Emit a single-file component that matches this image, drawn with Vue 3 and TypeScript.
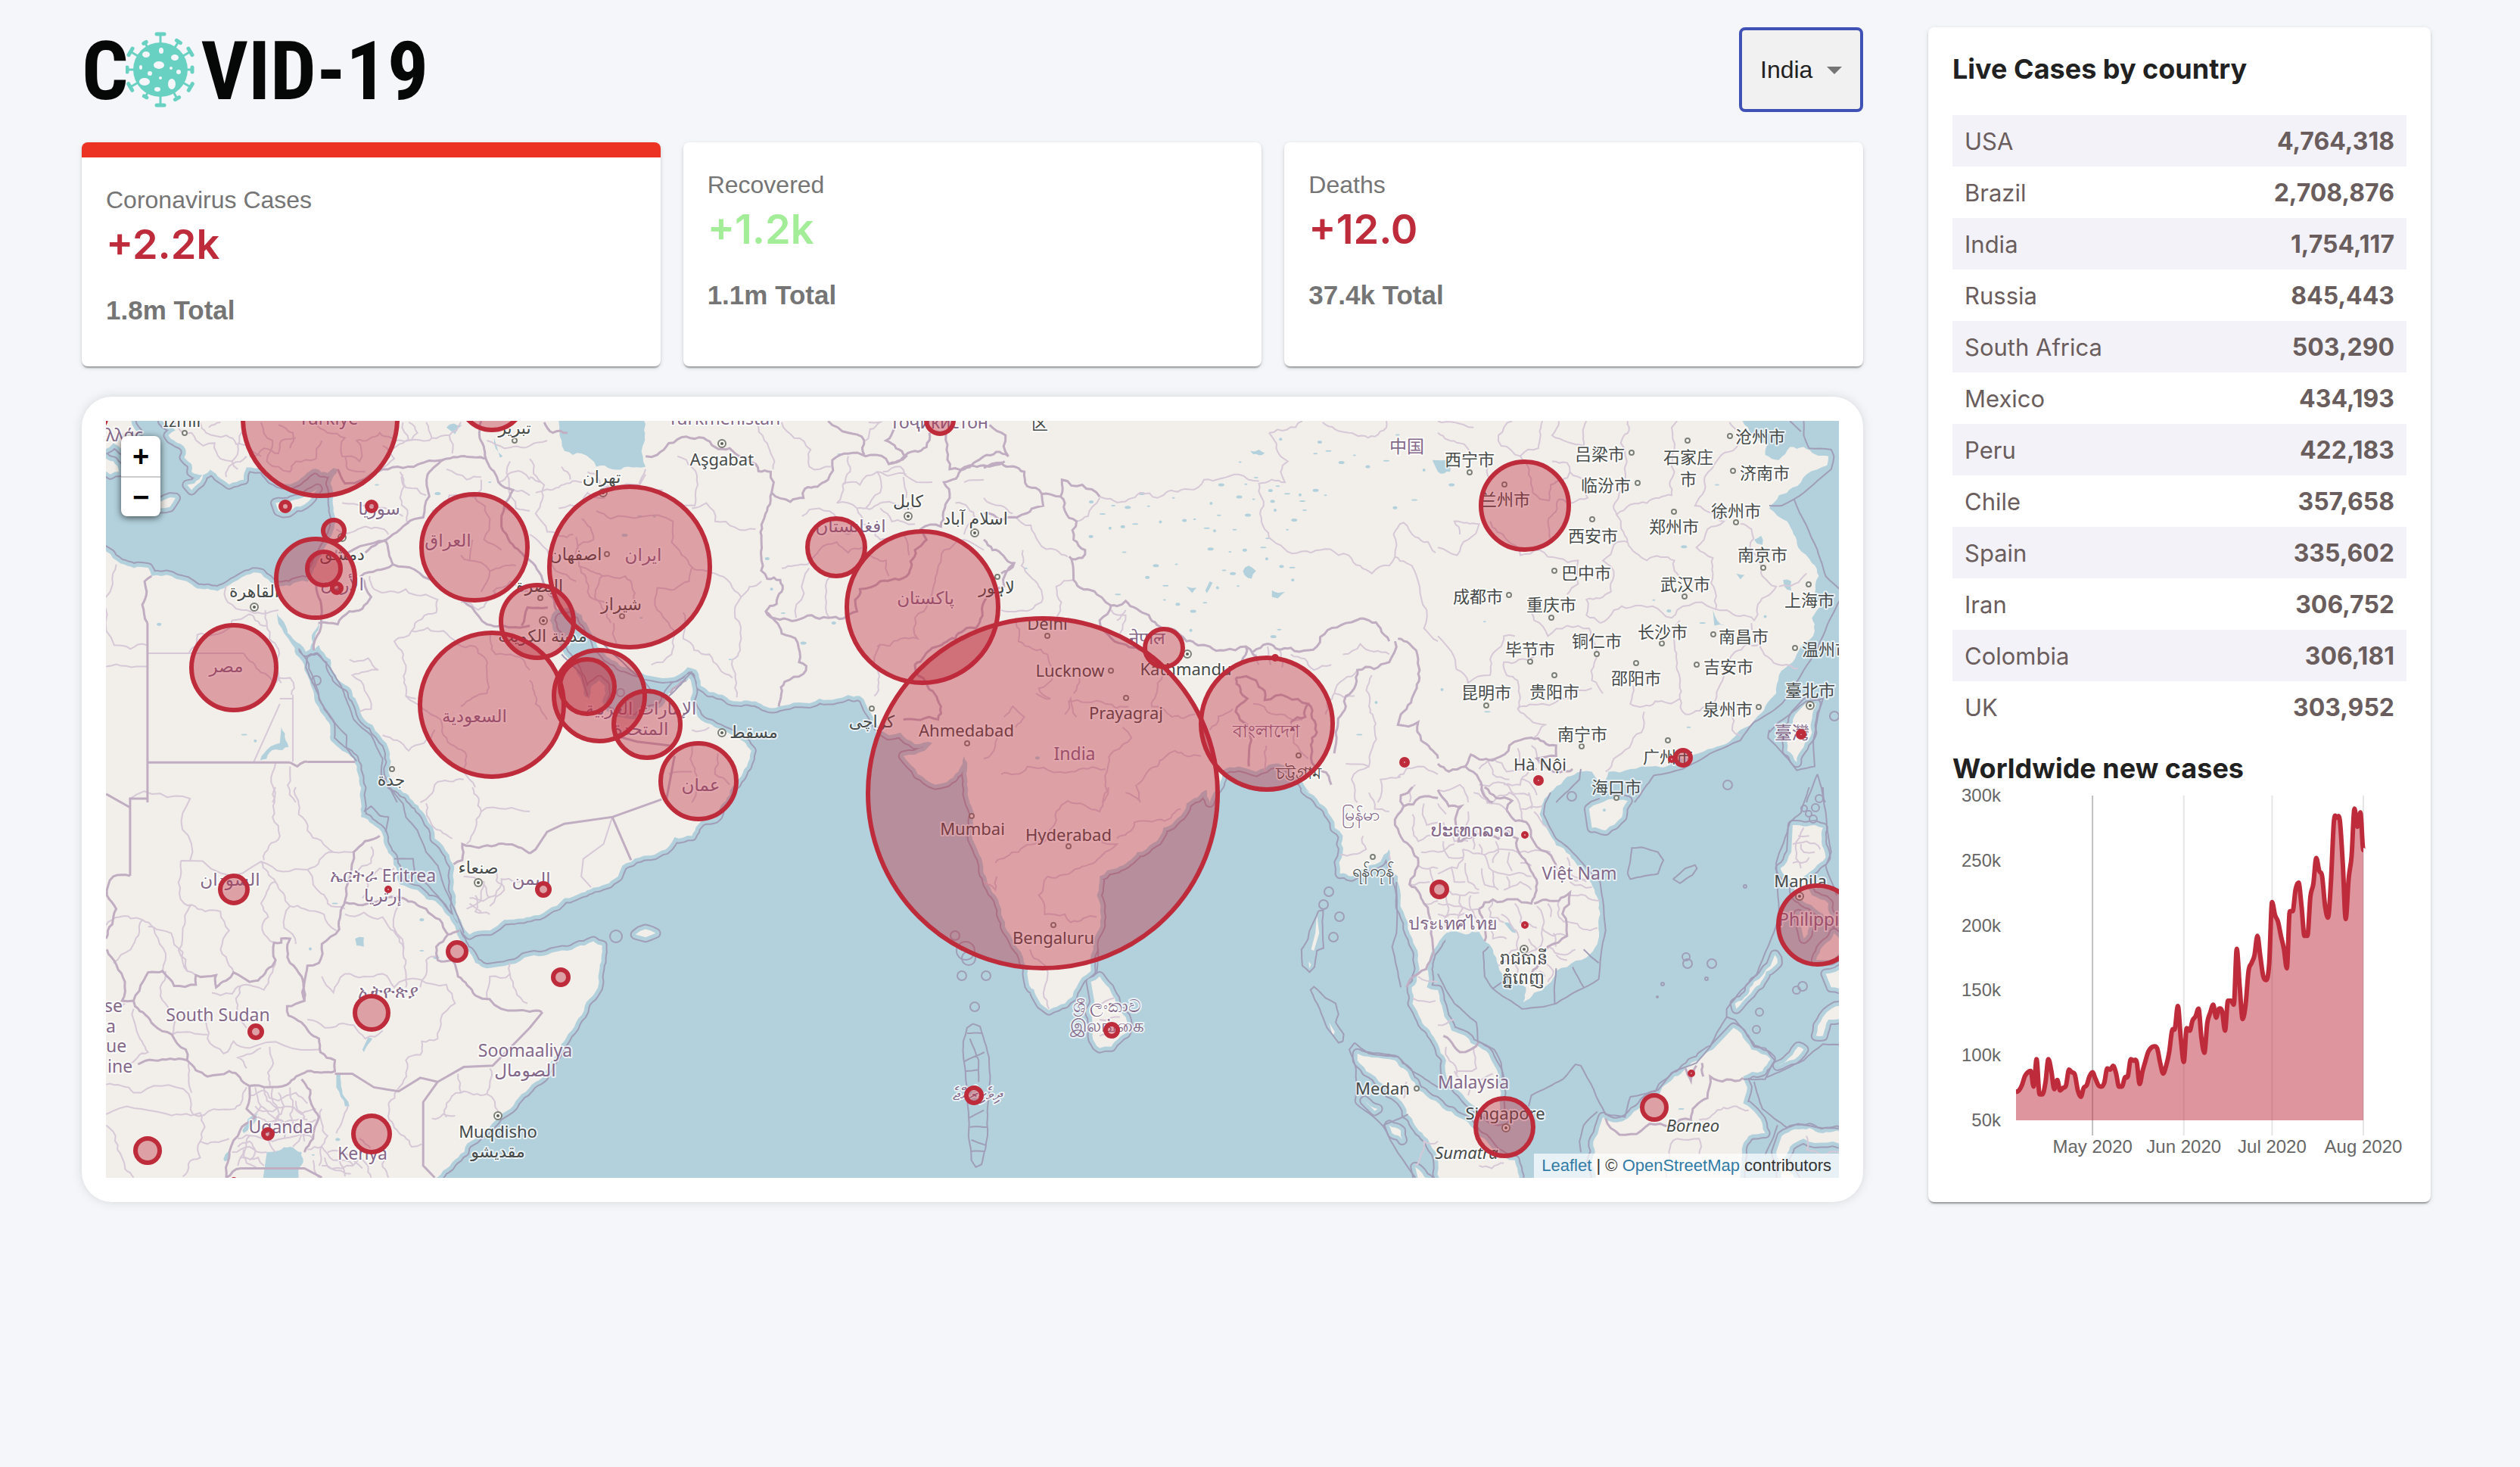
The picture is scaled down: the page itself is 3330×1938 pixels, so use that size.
<script setup lang="ts">
import { ref } from 'vue'

type Point = [number, number]

interface Stat { title: string; change: string; total: string; tone: 'red' | 'green'; active: boolean }
interface Label { text: string; x: number; y: number; kind: 'city' | 'country' | 'island'; anchor?: 'start' | 'middle' }

const country = ref('India')

const stats: Stat[] = [
  { title: 'Coronavirus Cases', change: '+2.2k', total: '1.8m Total', tone: 'red', active: true },
  { title: 'Recovered', change: '+1.2k', total: '1.1m Total', tone: 'green', active: false },
  { title: 'Deaths', change: '+12.0', total: '37.4k Total', tone: 'red', active: false },
]

const countries: [string, string][] = [
  ['USA', '4,764,318'], ['Brazil', '2,708,876'], ['India', '1,754,117'], ['Russia', '845,443'],
  ['South Africa', '503,290'], ['Mexico', '434,193'], ['Peru', '422,183'], ['Chile', '357,658'],
  ['Spain', '335,602'], ['Iran', '306,752'], ['Colombia', '306,181'], ['UK', '303,952'],
]

/* ---------- logo ---------- */
const spikes: [number, number, number][] = [
  [0, 47, 7], [33, 44, 5], [59, 46, 7], [90, 42, 5], [120, 46, 7], [150, 44, 5],
  [180, 47, 7], [209, 41, 4], [240, 46, 7], [270, 44, 5], [301, 46, 7], [330, 41, 4],
]
const holes: [number, number, number, number][] = [
  [27, 30, 5, 4], [47, 25, 3, 4], [65, 34, 5, 4], [44, 44, 7, 5], [20, 47, 2, 3], [32, 55, 3, 3],
  [60, 48, 2, 2], [70, 53, 3, 3], [25, 66, 7, 5], [46, 61, 2, 2], [61, 69, 5, 7], [42, 76, 4, 3],
]

/* ---------- line chart ---------- */
const daily = [
  72, 73, 77, 84, 87, 88, 76, 97, 70, 70, 79, 97, 88, 74, 81, 73, 75, 77, 89, 87, 85, 73, 68, 75, 77, 84, 87,
  82, 77, 76, 79, 90, 89, 92, 86, 76, 76, 83, 84, 97, 96, 95, 78, 88, 96, 103, 106, 107, 105, 94, 86, 92, 102,
  119, 121, 138, 113, 95, 121, 119, 127, 130, 136, 113, 102, 125, 133, 139, 129, 136, 134, 119, 142, 142, 139,
  182, 153, 128, 139, 165, 171, 177, 192, 176, 161, 158, 170, 218, 208, 203, 192, 182, 167, 211, 211, 228, 233,
  215, 192, 192, 222, 232, 252, 242, 238, 215, 206, 234, 280, 283, 281, 248, 205, 236, 253, 290, 276, 287, 258,
]
const plot = { left: 84, right: 543, top: 13, bottom: 442 }
const dayX = (day: number) => plot.left + (day * (plot.right - plot.left)) / (daily.length - 1)
const valueY = (k: number) => plot.bottom - ((k - 50) / 250) * (plot.bottom - plot.top)
const chartPoints: Point[] = daily.map((v, i) => [dayX(i), valueY(v)])

// Slope is flat on every local peak, so the curve never overshoots the data.
function curve(pts: Point[]): string {
  const slope = pts.map((p, i) => {
    const a = pts[i - 1]
    const b = pts[i + 1]
    if (!a || !b) return 0
    return (p[1] - a[1]) * (b[1] - p[1]) <= 0 ? 0 : (b[1] - a[1]) / (b[0] - a[0])
  })
  let d = `M${pts[0][0]},${pts[0][1]}`
  for (let i = 1; i < pts.length; i++) {
    const p = pts[i - 1]
    const q = pts[i]
    const h = (q[0] - p[0]) / 3
    d += `C${(p[0] + h).toFixed(1)},${(p[1] + slope[i - 1] * h).toFixed(1)} ${(q[0] - h).toFixed(1)},${(q[1] - slope[i] * h).toFixed(1)} ${q[0].toFixed(1)},${q[1].toFixed(1)}`
  }
  return d
}
const linePath = curve(chartPoints)
const areaPath = `${linePath}L${plot.right},${plot.bottom}L${plot.left},${plot.bottom}Z`
const yTicks = [300, 250, 200, 150, 100, 50]
const xTicks = [
  { label: 'May 2020', day: 26 }, { label: 'Jun 2020', day: 57 },
  { label: 'Jul 2020', day: 87 }, { label: 'Aug 2020', day: 118 },
]

/* ---------- map geometry ---------- */
// Every sheet of the map has its own grid; these turn grid points into map points.
const sheet = (ox: number, oy: number, kx: number, ky: number) => (pts: string): Point[] =>
  pts.trim().split(/\s+/).map((p) => {
    const [x, y] = p.split(',').map(Number)
    return [ox + x * kx, oy + y * ky]
  })
const A = sheet(100, 520, 0.3827, 0.3444)
const B = sheet(700, 520, 0.3827, 0.3444)
const C = sheet(1300, 520, 0.3827, 0.3444)
const D = sheet(1900, 520, 0.3635, 0.3444)
const E = sheet(100, 1040, 0.3827, 0.3571)
const F = sheet(700, 1040, 0.3827, 0.3571)
const G = sheet(1300, 1040, 0.3827, 0.3571)
const H = sheet(1900, 1040, 0.3635, 0.3571)

const noise = (x: number, y: number) => {
  const s = Math.sin(x * 12.9898 + y * 78.233) * 43758.5453
  return s - Math.floor(s) - 0.5
}
// Very long segments only close a ring outside the map, so they stay straight.
function rough(pts: Point[], amount = 0.34): Point[] {
  const split = (a: Point, b: Point, depth: number): Point[] => {
    const dx = b[0] - a[0]
    const dy = b[1] - a[1]
    const length = Math.hypot(dx, dy)
    if (depth === 0 || length < 8 || length > 300) return [b]
    const n = noise(a[0] + b[0], a[1] + b[1]) * amount
    const m: Point = [(a[0] + b[0]) / 2 - dy * n, (a[1] + b[1]) / 2 + dx * n]
    return [...split(a, m, depth - 1), ...split(m, b, depth - 1)]
  }
  return pts.reduce<Point[]>((out, p, i) => (i === 0 ? [p] : [...out, ...split(pts[i - 1], p, 3)]), [])
}
const d = (pts: Point[], closed = false) =>
  'M' + pts.map((p) => `${p[0].toFixed(1)},${p[1].toFixed(1)}`).join('L') + (closed ? 'Z' : '')
const lines = (at: (s: string) => Point[], list: string[], amount?: number) =>
  list.map((s) => d(rough(at(s), amount))).join('')

const chinaCoast = D('1110,60 1115,120 1150,165 1200,190 1190,235 1240,255 1280,205 1330,205 1420,240 1415,275 1340,310 1290,360 1240,390 1205,440 1270,490 1310,590 1360,650 1385,700 1370,770 1400,810 1360,860 1370,910 1320,970 1290,1030 1240,1080 1230,1150 1190,1200 1160,1240 1100,1290 1060,1335 1000,1360 930,1385 870,1410 780,1430 700,1440 620,1450 600,1500 560,1450 520,1450 470,1470 420,1520 380,1568')
const vietnamCoast = H('385,30 370,100 400,160 430,215 480,250 540,330 570,380 590,470 580,580 540,630 470,665 430,680 400,730 350,760 310,795 320,740 260,710 220,660 200,600 170,570 150,535 100,545 30,540')

const continent: Point[] = [
  ...A('60,590 105,605 155,652 250,668 262,700 330,700 400,732 490,757 530,735 590,695 640,690 690,735 740,738 800,722 830,660 860,590 885,540 900,490 890,450 888,400 880,345 905,290 890,285 870,305 830,288 790,315 740,348 690,335 650,290 590,283 580,330 530,348 500,325 465,292 440,312 400,300 400,270 375,245 380,215 340,180 320,160 345,140 300,105 310,60'),
  ...chinaCoast,
  ...vietnamCoast,
  ...G('1568,580 1535,650 1530,740 1560,750'),
  ...H('0,750 20,830 50,900 100,920 150,960 190,1000 220,1060 230,1130 225,1200 240,1230 200,1230 150,1200 100,1150 40,1090 30,1010 0,950'),
  ...G('1540,900 1510,860 1480,800 1478,740 1500,690 1500,620 1480,560 1455,480 1440,400 1430,330 1400,230 1370,275 1330,290 1270,330 1230,320 1240,240 1240,180 1200,110 1160,60 1110,10'),
  ...C('1140,1540 1100,1490 1060,1440 1000,1420 940,1450 880,1430 820,1450 815,1500 780,1568'),
  ...G('770,10 700,60 620,150 530,240 460,300 400,330 390,400 405,480 390,540 370,620 370,680 320,740 280,800 225,825 180,770 150,690 120,600 80,530 60,470 40,400 10,340'),
  ...F('1568,320 1545,230 1530,150 1520,60'),
  ...B('1510,1500 1500,1390 1480,1450 1440,1490 1400,1500 1340,1460 1290,1390 1330,1385 1390,1340 1330,1345 1280,1300 1240,1310 1180,1230 1160,1190 1140,1160 1060,1170 1000,1170 930,1185 860,1200 780,1180 680,1165 620,1145 590,1120 575,1060 545,1050 480,1090 400,1080 330,1050 260,1000 220,930 180,850 150,820 90,830 70,870 100,930 120,1000 150,1040 180,1110 190,1160 205,1170 215,1120 240,1100 260,1120 250,1180 260,1210 300,1240 370,1250 440,1210 480,1150 530,1110 550,1090 555,1180 580,1240 640,1280 700,1310 765,1370 750,1430 720,1480 690,1540'),
  ...F('640,115 580,140 560,180 500,185 480,220 430,250 380,260 320,290 305,330 260,360 180,390 120,410 60,455 0,480'),
  ...E('1480,490 1430,530 1360,545 1335,510 1310,440 1305,340 1290,250 1240,190 1210,110 1150,30'),
  ...A('1130,1530 1090,1500 1080,1440 1085,1380 1050,1310 990,1240 970,1180 920,1110 880,1020 840,965 822,985 838,880 810,980 795,990 750,940 725,890 695,840 720,920 760,1000 790,1060 820,1140 860,1240 880,1330 920,1370 960,1400 975,1460 985,1568'),
  ...E('985,110 1060,175 1095,260 1120,360 1180,380 1250,430 1300,500 1325,560 1345,600 1380,650 1420,670 1500,655'),
  ...F('0,625 60,620 130,605 190,585 220,570 250,585 240,680 225,760 190,810 160,870 125,930 70,1020 20,1090'),
  ...E('1500,1190 1400,1280 1320,1370 1240,1450 1200,1560 60,1560'),
]

const islands: Point[][] = [
  A('60,60 185,60 195,120 215,150 180,180 160,215 130,190 100,215 60,215'),
  A('90,240 130,260 150,300 120,310 90,290'),
  A('270,425 310,405 345,400 325,435 290,440'),
  A('385,350 410,345 440,310 430,340 400,370'),
  A('690,420 780,400 835,365 815,400 790,425 735,455 700,450'),
  G('370,720 400,700 440,760 490,850 490,910 440,960 400,965 375,920 365,830 380,780'),
  F('365,545 400,525 435,540 400,555'),
  H('550,80 620,45 690,50 670,110 610,160 560,150'),
  D('1340,1185 1375,1190 1360,1300 1305,1415 1270,1370 1265,1300 1300,1230'),
  H('1290,140 1340,145 1400,150 1395,200 1410,260 1370,300 1330,330 1360,400 1420,430 1440,500 1400,470 1340,430 1300,400 1245,300 1285,240'),
  H('1310,470 1350,520 1330,560'),
  H('1225,620 1235,650 1170,730 1085,820 1080,800 1150,720 1210,660'),
  H('1410,690 1480,660 1480,760 1430,740'),
  H('1375,640 1440,540 1480,600 1430,640'),
  H('1500,800 1430,820 1400,850 1375,920 1400,920 1420,860 1500,850'),
  H('1235,1030 1290,990 1310,960 1330,970 1280,1010'),
  H('1075,890 1120,940 1140,970 1210,1005 1180,1050 1110,1070 1125,1110 1110,1170 1190,1280 1130,1290 1105,1340 1100,1420 1090,1500 580,1500 560,1400 570,1300 600,1220 650,1240 690,1225 740,1180 800,1140 860,1070 900,1040 950,1010 1000,970'),
  H('1250,1290 1300,1265 1400,1280 1500,1270 1500,1310 1330,1300 1280,1330 1260,1380 1300,1450 1240,1460 1230,1350'),
  [
    ...G('1290,985 1340,1000 1420,1010 1450,1040 1470,1070 1500,1120 1560,1160'),
    ...H('50,1200 110,1240 150,1290 210,1350 280,1380 290,1500 40,1500'),
    ...G('1560,1350 1520,1290 1460,1210 1430,1150 1380,1100 1320,1050 1290,1010'),
  ],
  G('1400,1250 1440,1270 1445,1305 1410,1280'),
  G('1490,1405 1535,1450 1500,1450'),
  G('1315,1160 1360,1190 1350,1197'),
]
const islets = [
  G('1150,470 1158,540 1140,605 1130,600 1145,540'),
  G('1192,870 1212,905 1205,920'),
  G('1122,645 1130,655 1124,670'),
].map((r) => d(r, true)).join('')

const continentPath = d(rough(continent, 0.26), true)
const islandPath = islands.map((r) => d(rough(r, 0.26), true)).join('')
const farCoast = d(chinaCoast) + d(vietnamCoast)

const lakes = [
  B('100,60 100,105 110,180 120,220 180,230 230,280 285,290 340,280 400,280 390,200 395,105 400,60'),
  E('660,1350 740,1330 780,1350 770,1440 760,1500 640,1500'),
  E('965,560 995,555 995,590 970,585'),
  E('900,1055 915,1060 920,1120 945,1180 930,1180 900,1110'),
  E('1010,925 1025,930 995,980 990,970'),
  E('575,1270 630,1205 625,1230 580,1280'),
  E('510,1375 530,1345 535,1360 515,1385'),
  A('710,1280 725,1330 735,1355 690,1365 620,1425 650,1380 705,1340'),
  A('1280,130 1335,120 1310,155'),
  A('1445,170 1475,240 1465,245'),
  D('-20,255 50,260 45,300 0,300'),
  D('1000,830 1015,870 1045,890 1005,890'),
  D('1255,715 1285,720 1285,755 1260,740'),
  D('1150,560 1175,545 1180,580 1160,575'),
  D('1085,690 1115,695 1100,712'),
  H('240,500 270,510 285,540 260,525'),
  C('895,680 915,660 940,680 925,710 900,695'),
  C('995,755 1040,760 1015,785 995,780'),
  C('780,720 790,725 770,765 765,755'),
  C('700,740 735,745 720,765'),
  C('920,220 950,215 970,228 930,232'),
].map((r) => d(rough(r), true)).join('')

const ponds: Point[] = [
  ...C('885,263 1160,186 1190,220 1025,175 1145,230 1235,264 1280,237 1326,280 1390,258 1520,293 940,322 820,350 905,348 990,372 1048,384 1092,388 1015,355 882,396 932,405 997,413 1100,412 1006,447 1108,447 1146,371 1180,390 1420,438 1487,408 785,421 812,467 912,466 728,482 693,486 770,516 797,526 866,522 1072,485 1048,522 480,510 523,500 436,516 447,430 497,436 569,432 371,415 410,462 610,492 485,608 783,596 850,607 901,600 965,590 977,634 980,555 594,660 665,655 565,705 628,737 807,745 830,678 860,690 878,738 1028,663 1065,667 1067,715 764,802 723,835 624,791 670,808 463,770 715,908 1020,905 1000,932 146,670 185,1397 1297,1308 1355,1185 1429,158 546,383 655,400 370,548'),
  ...D('180,1220 15,1135 912,1280 895,587 785,792 840,833 962,880 1190,855 1015,350 50,350 170,875'),
  ...A('288,885 582,1308 620,1332 1040,350 1250,383 1430,340'),
  ...B('820,633 858,715 835,750 875,842 945,957 692,1020 1050,880 1072,232 430,470 380,470 328,543 385,860'),
  ...E('1195,490 895,430 810,598 1195,605 1245,630 820,1360 905,1303'),
  ...H('885,1190 605,85 840,830 1180,940'),
]

const majorBorders = [
  lines(A, [
    '262,700 238,720 245,760 230,810 248,880', '740,1415 765,1430 790,1412 800,1412',
    '822,985 850,840 830,720', '838,880 905,885 945,835 990,825 1020,780 985,700 1095,655 1070,565 905,640 900,600',
    '1000,610 1095,540 1200,475 1215,310 1280,250', '1095,655 1170,675 1300,775 1420,885 1470,890 1568,890',
    '905,290 930,345 1060,290 1130,285 1200,265 1280,250 1330,240 1420,250',
    '1400,105 1395,170 1420,260 1460,340 1510,370 1480,430 1470,510 1500,570 1568,640 1620,740 1660,830',
    '1540,890 1560,820 1630,820',
  ], 0.2),
  lines(E, [
    '108,600 170,720 160,790 200,790 235,715 250,685 300,680 340,735 415,730 415,695 485,695 485,740 520,715 545,685 600,720 630,715 690,640 685,575 710,575 710,560 740,560 740,650 780,700 790,790 730,810 735,845 780,870 840,930 845,980 895,1010 895,1050 800,1050 730,1100 600,1105 530,1050 455,1070 385,1010 380,970 270,880 205,810 200,790',
    '385,1010 270,1010 215,1025', '790,790 800,660 840,650 850,580 910,525 930,420 960,240 1050,180',
    '930,425 1050,420 1130,410 1210,450 1285,545 1245,590 1250,640 1300,640 1320,700 1380,770 1568,830 1610,832',
    '780,1080 810,1120 840,1220 820,1300 790,1350', '600,1105 590,1190 620,1220 560,1290 530,1370 520,1444 570,1410',
    '188,328 130,330 108,400 140,450 105,560', '1305,285 1335,270 1335,210 1450,215 1540,225 1568,245', '1285,545 1325,530',
  ], 0.24),
  lines(B, [
    '400,240 440,235 480,190 540,165 600,170 640,205 690,210 780,270 790,298 832,300 835,380 805,490 800,545 800,640 820,710 865,715 870,760 815,835 870,920 925,955 930,1030 955,1045 945,1075 880,1105 860,1200',
    '835,380 900,415 945,400 950,365 1030,330 1045,255 1100,230 1160,240 1230,250 1240,270 1330,220 1370,205 1380,150',
    '1030,105 1100,150 1155,180 1155,235', '1240,270 1300,240 1230,180 1260,130', '1440,140 1450,290 1520,275 1568,275 1640,260',
    '815,835 920,870 1030,860 1130,835 1140,750 1210,720 1310,690 1330,600 1370,560 1350,520 1420,510 1450,400 1430,340 1500,290 1568,240',
    '1673,650 1568,800 1540,900 1470,940 1390,975 1330,1040 1370,1110 1420,1200 1410,1250 1290,1250',
    '485,1150 540,1100', '50,110 80,150 130,150',
  ]),
  lines(C, [
    '20,120 75,160 85,240 0,240', '0,285 60,265 140,300 150,355 200,385 265,395 270,330 340,350 400,395', '200,385 205,430 130,465 0,460',
    '265,395 280,450 320,490 310,560 350,600 340,630 295,625 310,715 390,770 460,815 490,795 570,850 640,900 700,950 780,970 830,985 905,970 890,1030',
    '930,990 980,960 1060,975 1090,990 1150,970 1250,880 1330,870 1370,900 1400,950', '0,560 30,600 105,650 60,690',
    '440,810 400,870 480,960 560,1010', '905,970 930,1000 960,1020',
    '1430,940 1470,960 1500,1020 1495,1130 1440,1230 1430,1270 1500,1260 1510,1330 1568,1400',
    '1420,950 1400,1030 1290,1060 1250,1160 1250,1200 1215,1300 1210,1380',
    '870,1090 940,1100 970,1140 970,1175 1120,1190 1110,1240 1060,1260', '870,1090 910,1170 870,1220 910,1270 915,1430', '1120,1190 1150,1300 1130,1400 1200,1500',
  ]),
  lines(D, ['0,1420 40,1450 100,1430 120,1385 210,1400 260,1350 340,1320 430,1350 430,1390 360,1400 400,1440 490,1440', '100,1430 150,1480 200,1568']),
  lines(G, ['1568,40 1450,70 1420,140 1450,200 1500,290 1470,360 1520,430 1550,580 1500,690 1460,740', '1450,70 1440,30 1480,0']),
  lines(H, [
    '150,450 200,415 340,430 350,330 300,250 290,190 240,160 220,190 160,170 75,200 85,70 40,70 0,10',
    '250,85 330,140 360,220 420,270 430,300', '350,430 440,420 480,390 470,550 400,590 340,690', '170,0 270,50 250,85', '170,570 150,450',
    '20,920 60,960 80,980 120,970 150,940', '610,1225 660,1285 740,1270 770,1245 920,1230 980,1150 990,1070 1110,1075', '900,1040 920,1085 940,1030', '960,1020 965,1070',
  ]),
].join('')

const straightBorders = [
  d(A('248,880 248,1568')), d(A('248,1415 740,1415')), d(A('800,1413 965,1413')), d(E('248,0 248,42 188,42 188,328')), d(E('105,25 188,75')),
  d(E('1568,890 1440,1030 1340,1035 1250,1090 1190,1075 1115,1125 1030,1110 955,1060 895,1060')), d(E('1568,890 1612,832')),
  d(E('1250,1090 1200,1165 1200,1400 1240,1444')), d(E('570,1410 790,1410 850,1444')),
  d(F('0,245 20,230 60,165 120,135 285,110 350,270')), d(F('285,110 455,45')), d(B('485,1350 370,1335 290,1310')), d(B('500,1390 470,1568')),
].join('')
const straightMinor = [
  d(A('248,996 580,996')), d(A('750,1155 750,1412')), d(A('705,1170 750,1170')), d(A('705,1190 615,1412')), d(F('285,110 255,210 185,265 178,330 212,370')),
].join('')

const minorBorders = [
  lines(A, [
    '140,655 128,730 133,965 245,965', '105,1047 245,1047', '580,996 640,1070 680,1115 700,1090 740,1090 755,1130 745,1155', '390,996 420,925 530,900 540,870 600,845',
    '690,1415 680,1568', '740,1430 760,1568', '520,735 525,800 590,830 700,830', '660,890 700,980 710,1110', '600,845 620,870 660,890 655,830',
    '1015,700 1030,750 1140,750 1250,790 1245,840 1160,910 1100,950 1140,1060 1140,1160 1175,1170', '945,1020 1010,1015 1045,1060 955,1080 1020,1210 980,1220',
    '1160,910 1270,910 1380,970 1420,1060 1420,1150 1330,1200', '1140,1160 1260,1250 1270,1310 1350,1390 1340,1450 1380,1510', '1060,1310 1150,1370 1240,1290',
    '1340,1480 1240,1500 1190,1568', '1440,910 1450,1000 1568,1060',
    '400,150 440,200 480,190 500,250 540,260 560,200 580,130', '430,110 450,150 520,160 600,200 640,240', '520,320 540,270 590,240', '600,240 650,210 700,230 710,180 760,170',
    '640,110 680,180 660,260 740,300 760,260 830,250 850,180', '830,110 870,150 930,170 920,240 980,260 970,180 1050,150 1090,170 1150,180 1230,170 1290,160', '930,240 940,290 1000,300', '700,120 750,150 740,210',
    '1150,110 1180,150 1130,190 1090,210', '1290,160 1330,110', '900,520 1000,510 1080,540', '920,420 1000,430 1130,470', '1120,300 1140,360 1210,390', '1150,500 1120,400 1130,310',
    '1230,450 1290,390 1380,400 1400,330', '1380,400 1430,480 1410,560 1470,600', '1370,560 1360,640 1430,680 1400,760', '1430,680 1520,660', '1280,290 1350,330 1400,320', '1330,800 1390,830 1450,760',
    '1420,180 1480,210 1568,200', '1460,340 1540,300 1568,330', '1510,370 1568,390', '1500,260 1520,440 1568,450', '1480,430 1540,500', '1330,620 1360,640', '1440,760 1500,720 1568,760',
    '460,130 500,110', '540,260 560,290', '340,110 360,140 400,150', '1130,110 1150,180', '1060,200 1100,250 1050,290', '1210,110 1230,170', '1290,160 1300,230',
  ]),
  lines(E, [
    '188,42 395,42 395,270', '363,272 640,275 800,305 890,240 965,240', '690,0 680,110 705,180 650,270', '760,0 770,100 800,160 890,240',
    '363,272 375,430 400,435 500,460 530,530 500,600 530,660 545,685', '640,275 690,350 640,430 665,480 645,530 685,575', '400,435 370,520 385,680 415,695',
    '105,510 150,480 230,490 270,520 300,680', '230,490 190,600 130,650', '250,515 330,540 370,610 385,680', '310,680 310,800 335,915 455,915',
    '455,850 455,930 510,985 545,940 600,965 840,970', '470,760 500,770 570,735 560,830 590,890', '570,735 650,750 690,640', '690,350 740,440 720,520 760,580',
    '740,440 790,450 900,530', '800,305 820,360 870,430 930,450', '930,470 1060,480 1110,550 1140,640 1140,740', '930,690 1060,690 1100,740 1280,730 1310,800 1260,860 1250,930 1195,940 1190,990 1140,1010 1110,1120',
    '850,700 890,760 930,690', '800,860 860,890 960,880 1000,930 1060,900', '1420,780 1430,700 1500,690 1500,650', '1500,690 1560,800', '1320,1060 1330,1130 1420,1135 1430,1040',
    '1420,1135 1460,1200', '1330,1130 1280,1170 1280,1220', '1230,1225 1310,1215', '1080,1170 1110,1120', '1080,1170 1100,1260 1160,1330 1195,1320', '940,1180 900,1280', '850,1190 870,1290 840,1400',
    '105,1100 160,1105 200,1130 390,1135 405,1210 550,1190 590,1110', '105,1210 300,1205 430,1205 430,1310 530,1300', '105,1250 160,1370 200,1444', '430,1310 430,1370 370,1440',
    '200,820 210,900 250,980 180,1025', '1125,410 1130,620', '600,1140 650,1120 700,1160 760,1130 800,1170', '620,1180 680,1200 720,1180 780,1210 830,1190', '620,1110 640,1180 610,1250',
    '680,1110 700,1220 660,1290 690,1350', '740,1110 740,1210 780,1280 750,1330', '560,1300 620,1290 680,1310 760,1290 820,1300', '540,1350 600,1330 660,1350', '600,1290 590,1390 640,1410',
    '640,1180 720,1240 800,1230', '560,1400 580,1340', '850,1400 920,1410 980,1370 1020,1444', '870,1350 940,1360 990,1410', '1340,330 1410,350 1400,420 1350,450', '1360,410 1450,400 1470,340 1568,360',
    '1350,210 1400,90 1370,0', '1400,90 1568,90', '1210,60 1260,160 1300,190', '1430,440 1480,380 1450,300', '1190,740 1210,640 1250,620', '970,320 1020,280 1020,220', '990,410 1050,300 1100,300',
    '650,1110 660,1160 700,1190', '700,1130 720,1180 690,1230 740,1260', '760,1160 790,1220 760,1260', '620,1220 660,1240 700,1230', '640,1300 650,1250', '720,1300 710,1240', '790,1310 800,1240 830,1230',
    '560,1330 600,1310 620,1350 600,1380', '570,1370 630,1370 650,1400', '800,1340 850,1330 890,1380 960,1400', '860,1370 880,1410 950,1430', '820,1380 840,1444', '910,1380 930,1440', '980,1300 1020,1340', '1060,1360 1080,1444',
    '670,960 680,1010 670,1105', '640,965 560,1000 590,1040', '105,820 170,800', '390,1020 400,1130', '1360,430 1400,460', '1380,400 1380,460 1430,470', '1410,360 1430,410',
  ]),
  lines(B, [
    '0,250 50,350 20,460 60,530 150,540', '100,440 180,420 200,380 260,400', '230,450 280,480 495,490 490,570 560,665 640,690 730,780 730,940 700,1020 715,1165',
    '560,665 550,720 440,745 440,830 480,880 490,1000 420,1040', '730,780 800,720', '560,440 610,420 640,490 780,520', '510,240 580,350 570,430 520,420', '780,110 810,180 840,290',
    '870,110 970,215 965,280 1040,280', '965,670 920,860', '1040,700 1035,860', '870,670 960,655 1000,600', '1200,970 1280,940 1340,940 1330,860 1400,720 1430,600',
    '1190,1160 1205,1110 1190,1010 1210,960', '0,1100 20,1190 60,1250', '530,840 530,940 620,1000 700,1090', '160,550 170,660 250,700 330,700 360,790', '1100,240 1080,350 1140,350 1200,300 1300,310',
    '1060,420 1130,440 1210,420 1290,440 1350,420', '940,470 1000,440 1060,480', '1130,440 1150,500 1210,560 1290,540', '1200,300 1210,380 1160,440', '1000,600 1060,570 1100,610 1150,590',
    '180,480 220,560 160,600', '250,700 230,790 280,880', '170,660 200,760 260,800', '290,880 300,960', '0,540 60,600 90,680 160,720', '400,290 380,360 460,370', '200,300 260,360 380,350 400,310', '20,380 100,360 180,340',
    '1160,600 1230,640 1240,700', '1290,540 1310,620', '1430,600 1500,560 1568,600', '1470,420 1540,480 1500,540', '1170,110 1210,110 1160,180', '1500,340 1568,330', '560,1290 620,1280', '560,1350 570,1450 560,1568', '480,1460 560,1450', '650,1380 640,1460 690,1500',
    '1080,350 1060,420', '1290,320 1300,400', '1220,300 1280,280 1320,330 1390,340', '1210,440 1250,490 1330,500', '1050,520 1100,540 1150,500', '60,180 0,200', '0,320 40,340', '110,280 140,330',
  ]),
  lines(C, [
    '985,150 1100,105', '985,150 1010,210 1050,260 1025,300 1040,340 950,345 960,400 970,520 1010,575 1130,610 1260,620 1300,660 1340,690 1400,660 1420,625 1415,540 1450,495 1490,550 1560,610',
    '1420,625 1460,650 1500,720 1520,900 1568,950', '400,395 500,405 540,380 600,400 680,370 740,360 760,330 880,310 950,335', '1170,110 1260,150 1350,165 1390,130 1390,105',
    '105,470 190,570 250,600 290,625', '135,600 130,660 190,740 200,800', '250,860 250,740 310,715', '640,1050 600,1110 580,1200 650,1240 730,1230', '110,860 120,950 220,1000 240,1060',
    '310,1150 330,1090', '180,1150 230,1170 190,1130 240,1080', '480,1280 510,1320 450,1370 420,1480 410,1568', '290,1180 420,1190 500,1200', '0,1310 70,1290', '60,1460 150,1430 300,1450 420,1440',
    '530,1500 600,1430 660,1370 750,1390', '525,1500 540,1568', '1340,1080 1330,1200 1350,1290 1330,1430 1250,1420', '780,1290 860,1210', '930,1190 1000,1230 1100,1250', '975,1350 970,1450',
    '1060,1260 1070,1340 1120,1400', '400,400 360,470 320,490', '70,1240 100,1200 140,1240 110,1280', '280,1230 300,1170 320,1240', '0,400 60,430 100,460', '60,830 160,830 200,800', '0,1400 40,1350 50,1300',
    '1330,1430 1270,1480 1290,1568', '1360,1568 1370,1480 1440,1470', '1210,1150 1280,1160', '1180,1230 1210,1150 1290,1060', '1060,1000 1140,1060 1200,1040', '460,870 490,830',
    '1430,1470 1500,1430 1568,1460', '1470,1568 1490,1500', '940,1000 950,1040', '980,970 990,1040', '1020,980 1030,1050', '440,830 490,850 470,920', '1400,1000 1300,960 1240,1000',
  ]),
  lines(D, [
    '0,150 80,190 180,260 190,330', '270,105 220,160 230,200 300,240 365,210 380,105', '300,240 330,310 345,380 405,410 410,350 440,330', '440,105 415,160 530,200 540,105',
    '690,105 665,190 660,380 650,465 760,420 850,390 860,300 850,130 870,105', '415,260 470,265 480,300 540,330 545,400 440,405 400,490 410,560',
    '1060,110 1100,160 1020,250 970,320 970,370 935,430 1000,460 1040,490 980,520 940,590 1000,630 1000,690', '650,465 690,570 760,640 860,640 870,690 940,720',
    '690,570 640,580 600,640 640,700 630,760 540,790 540,850 590,880', '0,590 70,620 110,560 150,500 60,490 80,540', '190,490 250,560 300,620 370,600 510,640 510,730 470,770',
    '470,890 400,930 350,870 340,840', '590,880 640,830 700,820 850,860 870,830 1050,830 1150,870 1190,780 1230,740 1180,700 1170,650 1140,520 1100,500', '470,890 550,900 570,960 560,1100 600,1150',
    '0,930 50,990 110,1110 190,1080 190,1020 240,930 280,930', '350,1010 240,1030 250,1080 290,1100 290,1210 380,1190 560,1130', '290,1210 390,1270 350,1320',
    '880,870 860,960 870,1060 880,1170 790,1180 700,1190 710,1120', '880,1170 900,1230 1000,1190 1040,1070 1080,990 1170,960 1140,880', '1170,960 1200,1010 1310,1055',
    '1000,1190 1070,1220 1070,1290 1100,1310', '750,1220 740,1300 640,1400 610,1450', '1000,690 1010,830', '150,1440 200,1400 250,1450 320,1430', '150,1500 220,1490 280,1540', '300,1480 360,1540', '1240,740 1340,690', '0,105 60,110 130,130',
    '180,1400 200,1460 260,1480', '290,1360 300,1430 360,1440', '340,1350 370,1420', '0,1520 80,1500 110,1568', '240,1500 300,1500 330,1450', '410,350 480,300',
  ]),
  lines(G, [
    '0,350 40,380 45,330', '40,280 120,240 210,200 250,90 290,50 400,90 430,0', '220,330 330,300 410,250 460,210 400,190', '220,330 190,400 210,470 280,470 300,500 390,480', '160,600 200,650 220,700 225,820',
    '460,190 520,130 600,120 680,80', '490,20 540,50', '1330,20 1350,80 1400,90', '1230,250 1320,230 1310,180', '1400,250 1420,330', '1480,100 1500,200 1568,180', '1500,290 1568,300', '1480,780 1560,790', '1500,700 1568,720', '390,800 450,780', '400,860 470,850',
    '400,920 450,930', '1450,1150 1460,1090', '1568,1310 1520,1310 1490,1400', '1520,60 1530,140 1568,130', '1470,360 1540,350', '1520,430 1568,420', '1510,240 1568,240', '1540,300 1545,400',
  ]),
  lines(H, [
    '20,130 60,200 110,200', '110,90 100,150 160,170', '90,230 70,300 0,320', '90,230 170,250 200,310 220,380', '30,380 80,400 150,390', '170,250 240,230 300,250', '200,310 280,320 340,330',
    '100,280 110,350 150,380', '0,430 80,440 150,450', '130,20 190,60 250,85', '300,240 410,240', '360,440 380,520 470,550', '230,470 290,540 290,600 250,620', '380,520 360,600 300,640', '480,400 590,420',
    '480,500 580,520', '400,590 460,620 500,600', '220,660 300,640 350,620', '0,60 30,100', '160,0 180,60', '40,380 40,450', '180,60 260,20 330,30', '260,20 300,80 380,70', '130,230 140,160', '0,240 60,210',
    '200,420 190,480 240,500', '280,430 300,500 360,520', '240,380 300,350 340,380', '380,620 420,680 400,720', '340,700 380,740', '420,540 430,590', '0,880 60,860', '70,1050 140,1040 130,960', '110,1140 120,1080 200,1060', '90,1110 60,1050', '30,960 70,1060',
    '950,1230 1040,1185 1130,1195', '840,1350 870,1300 950,1300 950,1360', '840,1350 830,1444', '1290,210 1340,200 1390,230', '1290,280 1350,260', '1330,150 1320,300', '150,1400 240,1390', '1340,1290 1340,1340 1458,1350',
    '20,200 40,260 90,260', '150,210 160,250', '210,200 220,240 200,280', '50,300 60,350 100,350', '160,300 170,360 210,370', '260,240 270,310', '250,330 260,370', '0,360 30,370', '80,400 90,450 80,520', '120,400 120,450 140,500', '0,470 60,470 130,480', '40,450 30,520',
    '300,280 340,290', '470,260 480,320 540,350', '430,300 470,330 540,340', '480,350 560,370', '440,420 440,480 480,500', '400,430 410,480', '330,20 340,80', '300,80 310,130', '350,90 400,150', '200,500 200,560 250,560', '330,560 360,600', '430,620 470,640', '280,650 290,700', '370,680 390,700',
    '1320,210 1330,240 1370,240', '1310,180 1350,180',
  ]),
].join('')

const seaBorders = [
  D('1330,105 1330,160 1350,210 1430,215 1440,240 1430,290 1295,405 1380,600 1410,700 1470,760'),
  D('1470,770 1400,930 1320,1080 1250,1190 1150,1260 1100,1330 990,1380 890,1440 785,1465 715,1568'),
  D('1205,1290 1200,1320 1305,1445 1370,1430 1365,1330 1400,1170 1340,1180 1240,1260 1205,1300'),
  D('1205,430 1250,430 1295,405'), D('1380,1460 1340,1568'), D('1380,1460 1408,1568'), D('520,1440 515,1480 430,1568'), D('1280,105 1320,145'),
  H('410,20 390,60 385,100 430,190 470,220 550,310 590,350 610,530 585,710 430,800 305,820 200,745 170,700 165,610 185,590'),
  H('690,320 705,225 740,222 800,240 820,270 800,320 700,340 690,320'),
  H('855,340 900,300 935,288 942,300 925,325 880,355 855,340'),
  H('1350,0 1320,95 1280,130 1230,280 1240,480 1160,690 1050,820 1050,850 990,960 940,1020 860,1050 800,1120 700,1145 680,1220 610,1210 520,1030 500,1025 455,1080 340,1140 330,1180'),
  H('1050,850 1080,860 1130,920 1150,960 1190,965 1225,1010 1190,1080 1110,1080'),
  H('1150,1090 1180,1190 1270,1260 1310,1245 1480,1265'), H('1190,1075 1330,1010 1400,950 1480,955'), H('1400,0 1430,240 1410,290 1450,400'),
  H('580,1200 530,1250 515,1310 520,1350'), H('1235,1250 1190,1360'), H('0,690 60,800 140,870 145,940 205,970 230,1020 235,1080'),
  H('270,700 200,745'), H('490,665 530,740'), H('430,670 425,800'), H('530,600 585,650'),
  G('1155,458 1125,530 1120,560 1097,600 1100,660 1125,684 1142,665 1150,605 1173,595 1170,540 1172,455 1155,458'),
  G('1240,940 1225,945 1185,890 1160,820 1128,750 1140,738 1180,780 1215,800 1225,840 1215,870 1243,915 1240,940'),
  G('1282,1160 1285,1170 1380,1255 1490,1444'), G('1280,945 1262,970 1285,1040 1282,1160'), G('1280,945 1330,985 1430,997 1480,1050 1568,1110'), G('1380,1250 1465,1210'),
  G('1425,350 1425,540 1410,590 1440,740'), G('390,690 395,600'),
  F('1530,875 1510,890 1497,940 1505,1070 1515,1200 1525,1380 1540,1405 1560,1395 1573,1340 1581,1290 1580,1200 1590,1070 1586,1000 1565,920 1555,885 1530,875'),
  F('1510,910 1560,910'), F('1500,1015 1570,980'), F('1505,1050 1550,1045'), F('1515,1225 1568,1195'), F('1520,1257 1582,1257'), F('1525,1305 1575,1325'), F('1525,1347 1570,1347'),
  F('1520,930 1550,1010 1550,1090'),
  A('800,1010 830,995 870,1040 920,1130 960,1250 1020,1310 1060,1400 1055,1460 1110,1568'), A('800,1010 795,1050 850,1190 900,1270 935,1310 935,1360 970,1410'),
  E('1085,0 1130,60 1140,110 1180,160 1210,240 1250,290 1270,360 1320,480 1340,540'), E('1100,265 1165,265 1170,310 1230,380 1300,470'), E('995,90 1020,70 1050,105 1080,110 1070,165'),
  B('220,930 300,1010 400,1110 430,1150'), B('110,1000 180,1080 200,1160'), B('480,1160 560,1065'),
].map((p) => d(rough(p, 0.06))).join('')

const seaRings: [number, number, number][] = [
  [1756, 1178, 6], [1749, 1195, 6], [1262, 1236, 6], [1271, 1289, 6], [1303, 1289, 6], [1288, 1330, 6], [1280, 1266, 9], [1276, 1256, 12], [1770, 1211, 6], [1762, 1238, 6],
  [2424, 946, 6], [2283, 1037, 6], [2077, 1052, 6], [2230, 1273, 6], [2228, 1264, 5], [2262, 1273, 6], [2382, 1303, 6], [2374, 1308, 5], [2325, 1337, 5], [2321, 1360, 5],
  [2399, 1067, 5], [2390, 1075, 4], [2396, 1082, 5], [2384, 1068, 4], [2404, 1055, 5], [814, 1237, 8], [418, 899, 6], [820, 915, 5], [2197, 1300, 2], [2306, 1171, 2], [2255, 1293, 2], [2190, 1317, 1],
]

const cases: [number, number, number][] = [
  [423, 553, 102], [128, 553, 12], [377, 669, 6], [491, 669, 6], [441, 701, 14], [428, 751, 22], [417, 764, 52], [445, 777, 6],
  [627, 723, 70], [309, 882, 56], [650, 525, 43], [650, 931, 95], [710, 821, 48], [832, 749, 106], [792, 919, 60], [776, 907, 36],
  [855, 957, 44], [923, 1032, 50], [1105, 723, 38], [1219, 802, 100], [1242, 555, 18], [1378, 1048, 231], [1538, 856, 25], [1685, 869, 2],
  [1674, 956, 87], [1856, 1007, 4], [2015, 668, 58], [2224, 1001, 10], [2209, 1003, 2], [2380, 970, 4], [2033, 1031, 4], [309, 1175, 18],
  [513, 1175, 2], [604, 1257, 12], [491, 1338, 22], [338, 1363, 8], [491, 1498, 24], [354, 1498, 6], [195, 1520, 16], [309, 1561, 3],
  [718, 1175, 8], [741, 1291, 10], [1287, 1447, 10], [1469, 1361, 8], [1902, 1175, 10], [2015, 1103, 2], [2015, 1222, 2], [1988, 1489, 38],
  [2186, 1463, 16], [2235, 1418, 2], [2402, 1222, 52],
]

const towns: Point[] = [
  [244, 572], [680, 582], [518, 1016], [802, 732], [822, 814], [714, 790], [1318, 762], [1152, 936], [1278, 982], [1384, 840], [1468, 886], [1488, 922], [1716, 998],
  [1284, 1078], [1412, 1118], [1392, 1222], [1814, 1132], [1942, 624], [1988, 640], [2156, 598], [2230, 582], [2164, 638], [2286, 576], [2290, 622], [2294, 690],
  [2212, 676], [2104, 686], [2330, 750], [2054, 754], [2226, 788], [2390, 772], [1994, 786], [2050, 816], [2196, 850], [2264, 838], [2110, 864], [2022, 874],
  [2372, 856], [2242, 878], [2162, 876], [1964, 932], [2054, 892], [2324, 934], [2090, 986], [2204, 978], [2136, 1054], [1872, 1438],
]
const capitals: Point[] = [
  [452, 710], [336, 802], [954, 586], [797, 651], [718, 820], [1200, 682], [1288, 704], [954, 968], [1569, 864], [632, 1166], [658, 1474], [2014, 1254], [2378, 1184], [1990, 1490], [2392, 932],
]

const city = (text: string, x: number, y: number): Label => ({ text, x, y, kind: 'city' })
const nation = (text: string, x: number, y: number, anchor: 'start' | 'middle' = 'middle'): Label => ({ text, x, y, kind: 'country', anchor })
const labels: Label[] = [
  city('İzmir', 242, 564), nation('Ελλάς', 158, 583), nation('Türkiye', 434, 561), city('تبريز', 680, 573), nation('سوريا', 501, 680), city('دمشق', 452, 740),
  nation('الأردن', 452, 780), city('القاهرة', 336, 789), nation('العراق', 592, 722), nation('مصر', 299, 888), nation('السعودية', 627, 954), city('جدة', 517, 1038),
  nation('Turkmenistan', 957, 561), nation('Тоҷикистон', 1241, 566), city('Aşgabat', 954, 615), city('تهران', 795, 638), city('اصفهان', 761, 740), nation('ایران', 850, 741),
  city('شیراز', 821, 806), city('البصرة', 713, 782), city('مدينة الكويت', 717, 848), city('کابل', 1200, 670), city('اسلام آباد', 1289, 693), nation('افغانستان', 1124, 703),
  nation('پاکستان', 1223, 798), city('لاہور', 1317, 784), nation('الإمارات العربية', 847, 944), nation('المتحدة', 847, 971), city('مسقط', 996, 975), city('کراچی', 1152, 961),
  nation('عمان', 926, 1045), city('Ahmedabad', 1277, 973), city('区', 1374, 567), nation('中国', 1859, 598), city('Delhi', 1384, 832), nation('नेपाल', 1516, 851),
  city('Kathmandu', 1567, 892), city('Lucknow', 1414, 894), city('Prayagraj', 1488, 950), nation('India', 1420, 1004), nation('বাংলাদেশ', 1673, 974), city('চট্টগ্রাম', 1716, 1029),
  city('西宁市', 1942, 615), city('兰州市', 1989, 668), city('吕梁市', 2114, 608), city('石家庄', 2231, 612), city('市', 2231, 641), city('临汾市', 2122, 649), city('沧州市', 2326, 585),
  city('济南市', 2332, 633), city('徐州市', 2294, 683), city('郑州市', 2212, 704), city('西安市', 2105, 716), city('南京市', 2329, 741), city('巴中市', 2096, 765), city('武汉市', 2227, 780),
  city('上海市', 2391, 801), city('成都市', 1953, 796), city('重庆市', 2050, 807), city('长沙市', 2197, 843), city('南昌市', 2304, 849), city('铜仁市', 2110, 855), city('毕节市', 2022, 866),
  city('温州市', 2414, 866), city('吉安市', 2284, 889), city('邵阳市', 2162, 904), city('昆明市', 1964, 923), city('贵阳市', 2054, 922), city('臺北市', 2392, 920), city('泉州市', 2283, 945),
  nation('臺灣', 2368, 976), city('南宁市', 2091, 978), city('广州市', 2204, 1008), city('Hà Nội', 2035, 1018), city('海口市', 2136, 1048), nation('السودان', 304, 1170),
  nation('ኤርትራ Eritrea', 506, 1165), nation('إرتريا', 506, 1191), city('صنعاء', 632, 1154), nation('اليمن', 702, 1169), nation('ኢትዮጵያ', 513, 1318), nation('South Sudan', 288, 1349),
  nation('se', 138, 1337, 'start'), nation('a', 140, 1364, 'start'), nation('ue', 140, 1390, 'start'), nation('ine', 142, 1417, 'start'), nation('Uganda', 371, 1497), nation('Kenya', 479, 1532),
  nation('Soomaaliya', 694, 1396), nation('الصومال', 694, 1422), city('Muqdisho', 658, 1503), city('مقديشو', 658, 1529), city('Mumbai', 1285, 1103), nation('ދިވެހިރާއްޖެ', 1292, 1453),
  city('Hyderabad', 1412, 1111), city('Bengaluru', 1392, 1247), nation('ශ්‍රී ලංකාව', 1463, 1337), nation('இலங்கை', 1463, 1363), nation('မြန်မာ', 1798, 1084), city('ရန်ကုန်', 1814, 1158),
  city('Medan', 1827, 1446), nation('ประเทศไทย', 1919, 1228), nation('ປະເທດລາວ', 1946, 1105), nation('Việt Nam', 2087, 1162), city('រាជធានី', 2013, 1274), city('ភ្នំពេញ', 2013, 1300),
  city('Manila', 2379, 1172), nation('Philippines', 2350, 1223, 'start'), nation('Malaysia', 1947, 1438), city('Singapore', 1989, 1479),
  { text: 'Sumatra', x: 1938, y: 1531, kind: 'island' }, { text: 'Borneo', x: 2237, y: 1495, kind: 'island' },
]
</script>

<template>
  <div class="app">
    <main class="left">
      <header class="header">
        <h1 class="logo" aria-label="COVID-19">
          <span>C</span>
          <svg class="virus" viewBox="0 0 92 100" aria-hidden="true">
            <g v-for="[angle, reach, cap] in spikes" :key="angle" :transform="`rotate(${angle} 46 50)`">
              <path :d="`M46,20V${50 - reach}`" stroke-width="3" />
              <path :d="`M${46 - cap + 2},${50 - reach}h${2 * cap - 4}`" stroke-width="5" stroke-linecap="round" />
            </g>
            <circle cx="46" cy="50" r="36" class="virus-body" />
            <ellipse v-for="[cx, cy, rx, ry] in holes" :key="`${cx}-${cy}`" :cx="cx" :cy="cy" :rx="rx" :ry="ry" class="virus-hole" />
          </svg>
          <span>VID-19</span>
        </h1>
        <div class="dropdown">
          <select v-model="country" aria-label="Country">
            <option value="worldwide">Worldwide</option>
            <option v-for="[name] in countries" :key="name" :value="name">{{ name }}</option>
          </select>
          <svg class="arrow" viewBox="0 0 20 10" aria-hidden="true"><path d="M0,0H20L10,10Z" /></svg>
        </div>
      </header>

      <section class="stats">
        <article v-for="s in stats" :key="s.title" class="card stat" :class="{ active: s.active }">
          <p class="stat-title">{{ s.title }}</p>
          <h2 class="stat-change" :class="s.tone">{{ s.change }}</h2>
          <p class="stat-total">{{ s.total }}</p>
        </article>
      </section>

      <section class="map-card">
        <div class="map">
          <svg class="world" viewBox="140 556 2290 1000" preserveAspectRatio="xMidYMid slice" role="img" aria-label="Map of cases">
            <path class="outline" :d="continentPath" />
            <path class="outline" :d="islandPath" />
            <path class="outline-gap" :d="continentPath" />
            <path class="outline-gap" :d="islandPath" />
            <path class="open-sea" :d="farCoast" />
            <path class="land" :d="continentPath" />
            <path class="land" :d="islandPath" />
            <path class="land" :d="islets" />
            <path class="water" :d="lakes" />
            <ellipse v-for="([x, y], i) in ponds" :key="`p${i}`" class="water" :cx="x" :cy="y" :rx="2 + (i % 3)" :ry="1 + (i % 2)" />
            <path class="minor" :d="minorBorders" />
            <path class="minor" :d="straightMinor" />
            <path class="major" :d="majorBorders" />
            <path class="major" :d="straightBorders" />
            <path class="sea" :d="seaBorders" />
            <circle v-for="([x, y, r], i) in seaRings" :key="`r${i}`" class="sea" :cx="x" :cy="y" :r="r" />
            <circle v-for="([x, y], i) in towns" :key="`t${i}`" class="town" :cx="x" :cy="y" r="3" />
            <g v-for="([x, y], i) in capitals" :key="`c${i}`">
              <circle class="town" :cx="x" :cy="y" r="5" />
              <circle class="capital-dot" :cx="x" :cy="y" r="2" />
            </g>
            <text v-for="l in labels" :key="`${l.text}${l.x}`" :class="l.kind" :x="l.x" :y="l.y" :text-anchor="l.anchor ?? 'middle'">{{ l.text }}</text>
            <circle v-for="([x, y, r], i) in cases" :key="`k${i}`" class="case" :cx="x" :cy="y" :r="r" />
          </svg>
          <div class="zoom">
            <button type="button" aria-label="Zoom in">+</button>
            <button type="button" aria-label="Zoom out">−</button>
          </div>
          <div class="attribution">
            <a href="https://leafletjs.com">Leaflet</a> | © <a href="https://osm.org/copyright">OpenStreetMap</a> contributors
          </div>
        </div>
      </section>
    </main>

    <aside class="card side">
      <h3>Live Cases by country</h3>
      <table>
        <tbody>
          <tr v-for="[name, count] in countries" :key="name">
            <th scope="row">{{ name }}</th>
            <td>{{ count }}</td>
          </tr>
        </tbody>
      </table>
      <h3>Worldwide new cases</h3>
      <svg class="chart" viewBox="0 0 600 504" role="img" aria-label="Worldwide new cases">
        <line v-for="(t, i) in xTicks" :key="t.label" :x1="dayX(t.day)" :x2="dayX(t.day)" :y1="plot.top" y2="462" :class="i === 0 ? 'axis' : 'grid'" />
        <path :d="areaPath" class="area" />
        <path :d="linePath" class="line" />
        <text v-for="v in yTicks" :key="v" x="64" :y="valueY(v) + 8" text-anchor="end">{{ v }}k</text>
        <text v-for="t in xTicks" :key="t.label" :x="dayX(t.day)" y="485" text-anchor="middle">{{ t.label }}</text>
      </svg>
    </aside>
  </div>
</template>

<style>
body {
  margin: 0;
  background: #f5f6fa;
}
</style>

<style scoped>
.app {
  display: grid;
  grid-template-columns: minmax(0, 2354fr) minmax(0, 664fr);
  column-gap: 86px;
  padding: 36px 118px 36px 108px;
  font-family: Inter, "Liberation Sans", sans-serif;
  color: #212121;
}
h1, h2, h3, p {
  margin: 0;
}
.left {
  display: flex;
  flex-direction: column;
  gap: 40px;
}
.header {
  display: flex;
  justify-content: space-between;
  align-items: center;
  height: 112px;
}
.logo {
  display: flex;
  align-items: center;
  font: bold 108px/108px "Liberation Sans Narrow", "Roboto Condensed", "Open Sans Condensed", "DejaVu Sans Condensed", sans-serif;
  color: #060807;
}
.logo span {
  padding-top: 4px;
}
.virus {
  width: 92px;
  height: 100px;
  margin: 0 8px 0 -4px;
  stroke: #69d1c2;
  fill: none;
}
.virus-body {
  fill: #69d1c2;
  stroke: none;
}
.virus-hole {
  fill: #f5f6fa;
  stroke: none;
}
.dropdown {
  position: relative;
}
.dropdown select {
  display: block;
  appearance: none;
  width: 164px;
  height: 112px;
  padding: 0 56px 0 24px;
  border: 4px solid #4051b5;
  border-radius: 8px;
  background: #f1f1f1;
  color: #212121;
  font: 32px/48px "Liberation Sans", Arial, sans-serif;
}
.arrow {
  position: absolute;
  right: 28px;
  top: 52px;
  width: 20px;
  height: 10px;
  fill: #757575;
  pointer-events: none;
}
.card {
  background: #fff;
  border-radius: 8px;
  box-shadow: 0 4px 2px -2px rgba(0, 0, 0, 0.2), 0 2px 2px 0 rgba(0, 0, 0, 0.14), 0 2px 6px 0 rgba(0, 0, 0, 0.12);
}
.stats {
  display: grid;
  grid-template-columns: repeat(3, minmax(0, 1fr));
  gap: 30px;
}
.stat {
  box-sizing: border-box;
  min-height: 296px;
  padding: 32px 32px 48px;
}
.stat.active {
  border-top: 20px solid #ec3323;
}
.stat-title {
  font: 32px/48px "Liberation Sans", Arial, sans-serif;
  color: #757575;
}
.stat-change {
  font-size: 54px;
  line-height: 70px;
  font-weight: 600;
}
.stat-change.red {
  color: #be2b3b;
}
.stat-change.green {
  color: #a4ed98;
}
.stat-total {
  margin-top: 26px;
  font: bold 35px/52px "Liberation Sans", Arial, sans-serif;
  color: #757575;
}
.map-card {
  padding: 32px;
  border-radius: 40px;
  background: #fff;
  box-shadow: 0 0 16px -2px rgba(0, 0, 0, 0.16);
}
.map {
  position: relative;
  height: 1000px;
  overflow: hidden;
  background: #b2d1dc;
}
.world {
  display: block;
  width: 100%;
  height: 100%;
}
.outline {
  fill: none;
  stroke: #a09db8;
  stroke-width: 14;
  stroke-linejoin: round;
}
.outline-gap {
  fill: none;
  stroke: #b2d1dc;
  stroke-width: 10;
  stroke-linejoin: round;
}
.open-sea {
  fill: none;
  stroke: #b2d1dc;
  stroke-width: 30;
}
.land {
  fill: #f2efea;
}
.water {
  fill: #b2d1dc;
}
.minor {
  fill: none;
  stroke: #d6c8d7;
  stroke-width: 2;
}
.major {
  fill: none;
  stroke: #c0adc2;
  stroke-width: 3;
}
.sea {
  fill: none;
  stroke: #a09db8;
  stroke-width: 2;
}
.town {
  fill: #f8f8f5;
  stroke: #7c7f76;
  stroke-width: 2;
}
.capital-dot {
  fill: #5c6055;
}
.world text {
  font-family: "Noto Sans", "DejaVu Sans", "Noto Sans CJK SC", sans-serif;
  font-size: 22px;
  paint-order: stroke;
  stroke: rgba(255, 255, 255, 0.7);
  stroke-width: 4px;
  stroke-linejoin: round;
  fill: #464a49;
}
.world .country {
  font-size: 23px;
  fill: #846889;
}
.world .island {
  font-style: italic;
  font-size: 22px;
}
.case {
  fill: #be2b3b;
  fill-opacity: 0.4;
  stroke: #be2b3b;
  stroke-width: 6;
}
.zoom {
  position: absolute;
  left: 20px;
  top: 20px;
  display: flex;
  flex-direction: column;
  width: 52px;
  border-radius: 8px;
  overflow: hidden;
  background: #fff;
  box-shadow: 0 2px 10px rgba(0, 0, 0, 0.65);
}
.zoom button {
  height: 53px;
  padding: 0;
  border: 0;
  background: none;
  color: #000;
  font: bold 38px/52px "Liberation Sans", Arial, sans-serif;
}
.zoom button + button {
  border-top: 2px solid #ccc;
}
.attribution {
  position: absolute;
  right: 0;
  bottom: 0;
  padding: 0 10px;
  background: rgba(255, 255, 255, 0.7);
  color: #333;
  font: 22px/32px "Liberation Sans", Arial, sans-serif;
}
.attribution a {
  color: #317ba6;
  text-decoration: none;
}
.side {
  display: flex;
  flex-direction: column;
  padding: 32px;
}
.side h3 {
  font-size: 36px;
  line-height: 46px;
  font-weight: 700;
}
table {
  margin: 38px 0 24px;
  border-collapse: collapse;
  color: #6a5d5d;
  line-height: 38px;
}
tr:nth-child(odd) {
  background: #f3f2f8;
}
th, td {
  padding: 16px 16px 14px;
  font-size: 31px;
  font-weight: 400;
  text-align: left;
}
td {
  font-size: 32px;
  font-weight: 700;
  text-align: right;
}
.chart {
  display: block;
  width: 100%;
  height: auto;
}
.chart text {
  font: 24px "Liberation Sans", Arial, sans-serif;
  fill: #666;
}
.grid {
  stroke: #e5e5e5;
  stroke-width: 2;
}
.axis {
  stroke: #bfbfbf;
  stroke-width: 2;
}
.area {
  fill: #be2b3b;
  fill-opacity: 0.5;
}
.line {
  fill: none;
  stroke: #be2b3b;
  stroke-width: 6;
  stroke-linejoin: round;
}
</style>
